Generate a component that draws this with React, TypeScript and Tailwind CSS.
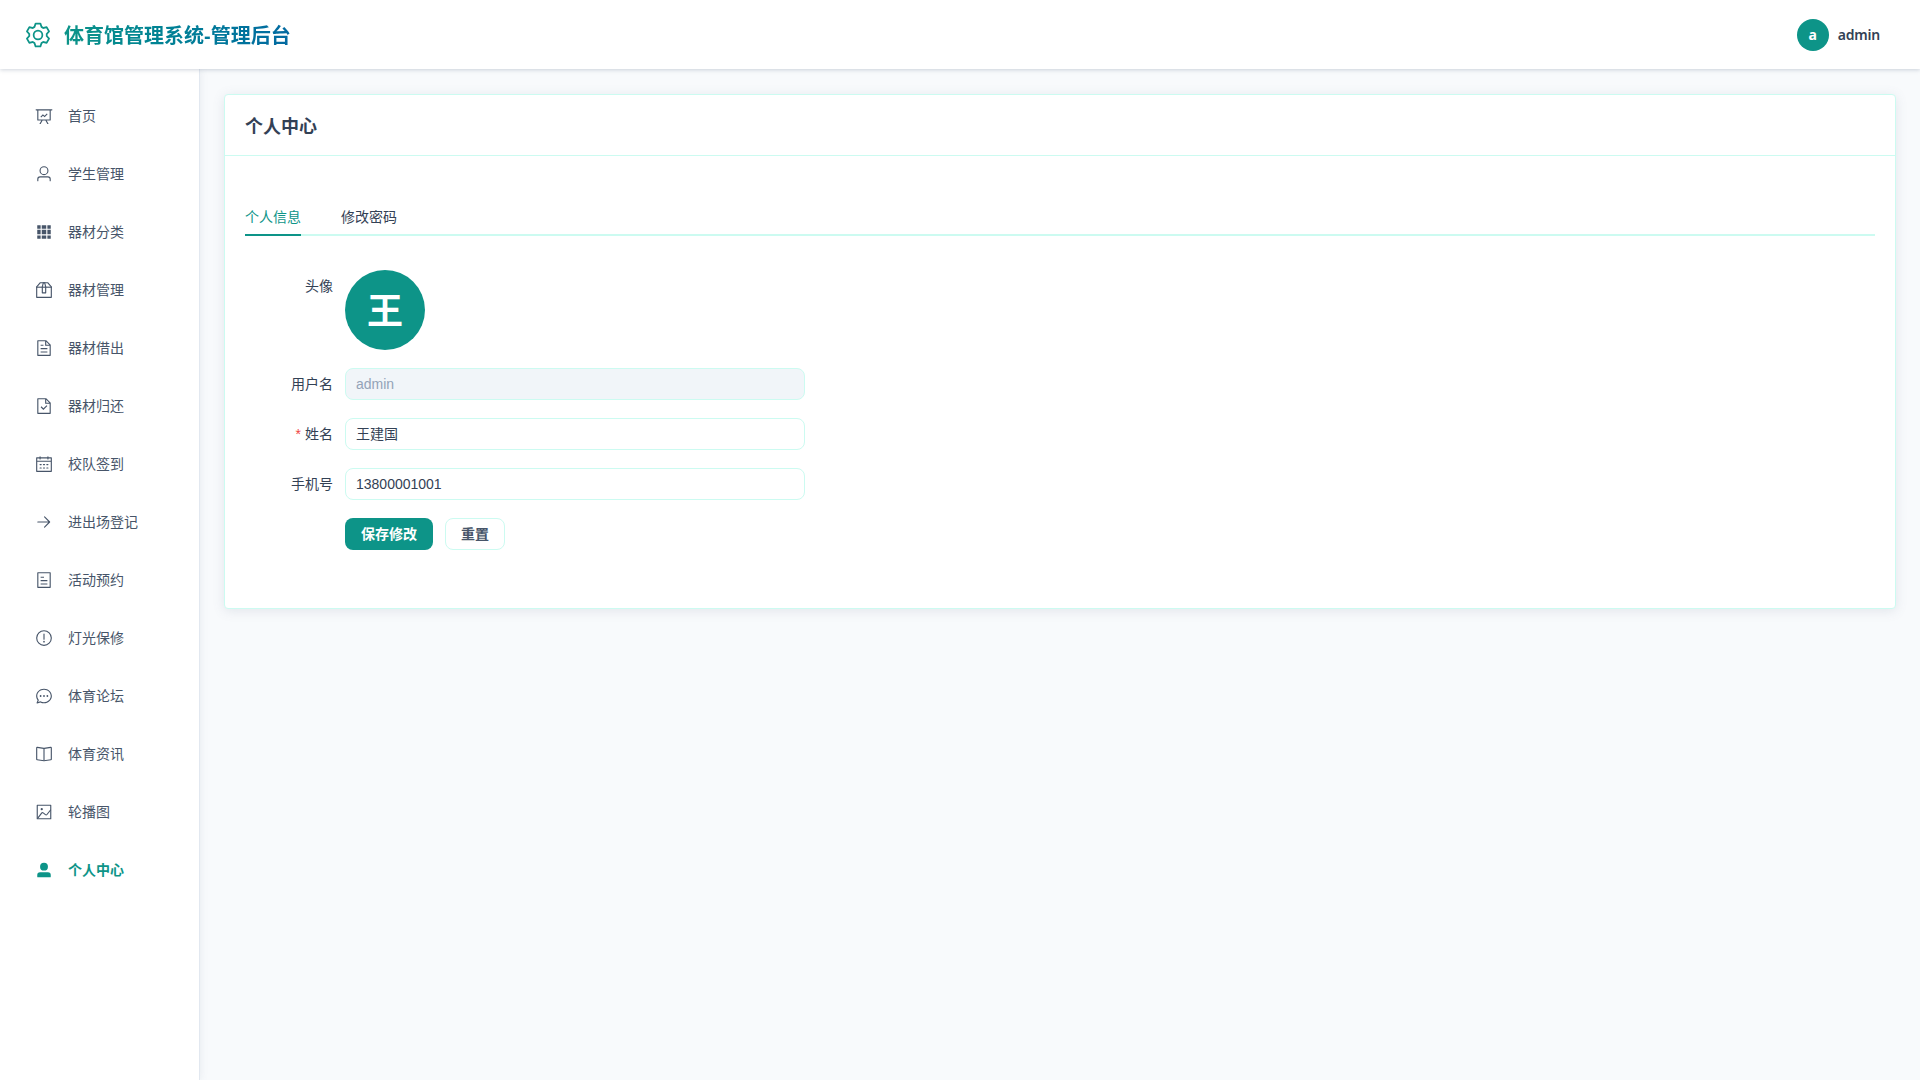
import React from 'react';

const FONT = "font-['Liberation_Sans','Noto_Sans_CJK_SC',sans-serif]";

// element-style icons on the 1024 grid
const icons: Record<string, string[]> = {
  dataLine: [
    'M359.168 768H160a32 32 0 0 1-32-32V192H64a32 32 0 0 1 0-64h896a32 32 0 1 1 0 64h-64v544a32 32 0 0 1-32 32H665.216l110.848 192h-73.856L591.36 768H433.024L322.176 960H248.32l110.848-192zM832 192H192v512h640V192z',
    'M352 600l-44-44 140-140 96 80 130-130 44 44-170 172-96-80z',
  ],
  user: [
    'M512 512a192 192 0 1 0 0-384 192 192 0 0 0 0 384zm0 64a256 256 0 1 1 0-512 256 256 0 0 1 0 512zm320 320v-96a96 96 0 0 0-96-96H288a96 96 0 0 0-96 96v96a32 32 0 1 1-64 0v-96a160 160 0 0 1 160-160h448a160 160 0 0 1 160 160v96a32 32 0 1 1-64 0z',
  ],
  grid: [
    'M640 384v256H384V384h256zm64 0h192v256H704V384zm-64 512H384V704h256v192zm64 0V704h192v192H704zm-64-768v192H384V128h256zm64 0h192v192H704V128zM320 384v256H128V384h192zm0 512H128V704h192v192zm0-768v192H128V128h192z',
  ],
  box: [
    'M317.056 128 128 344.064V896h768V344.064L706.944 128H317.056zm-14.528-64h418.944a32 32 0 0 1 24.064 10.88l206.528 236.096A32 32 0 0 1 960 332.032V928a32 32 0 0 1-32 32H96a32 32 0 0 1-32-32V332.032a32 32 0 0 1 7.936-21.12L278.4 75.008A32 32 0 0 1 302.528 64z',
    'M64 320h896v64H64z',
    'M448 327.872V640h128V327.872L526.08 128h-28.16L448 327.872zM448 64h128l64 256v352a32 32 0 0 1-32 32H416a32 32 0 0 1-32-32V320l64-256z',
  ],
  document: [
    'M832 384H576V128H192v768h640V384zm-26.496-64L640 154.496V320h165.504zM160 64h480l256 256v608a32 32 0 0 1-32 32H160a32 32 0 0 1-32-32V96a32 32 0 0 1 32-32zm160 448h384v64H320v-64zm0-192h160v64H320v-64zm0 384h384v64H320v-64z',
  ],
  documentChecked: [
    'M805.504 320 640 154.496V320h165.504zM832 384H576V128H192v768h640V384zM160 64h480l256 256v608a32 32 0 0 1-32 32H160a32 32 0 0 1-32-32V96a32 32 0 0 1 32-32zm318.4 582.144 180.992-180.992L704.64 510.4 478.4 736.64 320 578.304l45.248-45.312L478.4 646.144z',
  ],
  calendar: [
    'M128 384v512h768V192H768v32a32 32 0 1 1-64 0v-32H320v32a32 32 0 0 1-64 0v-32H128v128h768v64H128zm192-256h384V96a32 32 0 1 1 64 0v32h160a32 32 0 0 1 32 32v768a32 32 0 0 1-32 32H96a32 32 0 0 1-32-32V160a32 32 0 0 1 32-32h160V96a32 32 0 0 1 64 0v32zm-32 384h64a32 32 0 0 1 0 64h-64a32 32 0 0 1 0-64zm0 192h64a32 32 0 1 1 0 64h-64a32 32 0 1 1 0-64zm192-192h64a32 32 0 0 1 0 64h-64a32 32 0 0 1 0-64zm0 192h64a32 32 0 1 1 0 64h-64a32 32 0 1 1 0-64zm192-192h64a32 32 0 1 1 0 64h-64a32 32 0 1 1 0-64zm0 192h64a32 32 0 1 1 0 64h-64a32 32 0 1 1 0-64z',
  ],
  right: [
    'M754.752 480H160a32 32 0 1 0 0 64h594.752L521.344 777.344a32 32 0 0 0 45.312 45.312l288-288a32 32 0 0 0 0-45.312l-288-288a32 32 0 1 0-45.312 45.312L754.752 480z',
  ],
  tickets: [
    'M192 128v768h640V128H192zm-32-64h704a32 32 0 0 1 32 32v832a32 32 0 0 1-32 32H160a32 32 0 0 1-32-32V96a32 32 0 0 1 32-32zm160 448h384v64H320v-64zm0-192h192v64H320v-64zm0 384h384v64H320v-64z',
  ],
  warning: [
    'M512 64a448 448 0 1 1 0 896 448 448 0 0 1 0-896zm0 832a384 384 0 0 0 0-768 384 384 0 0 0 0 768zm48-176a48 48 0 1 1-96 0 48 48 0 0 1 96 0zm-48-464a32 32 0 0 1 32 32v288a32 32 0 0 1-64 0V288a32 32 0 0 1 32-32z',
  ],
  chat: [
    'm174.72 855.68 135.296-45.12 23.68 11.84C388.096 849.536 448.576 864 512 864c211.84 0 384-166.784 384-352S723.84 160 512 160 128 326.784 128 512c0 69.12 24.96 139.264 70.848 199.232l22.08 28.8-46.272 115.584zm-45.248 82.56A32 32 0 0 1 89.6 896l58.368-145.92C94.72 680.32 64 596.864 64 512 64 299.904 256 96 512 96s448 203.904 448 416-192 416-448 416a461.056 461.056 0 0 1-206.912-48.384l-175.616 58.56z',
    'M512 563.2a51.2 51.2 0 1 1 0-102.4 51.2 51.2 0 0 1 0 102.4zm192 0a51.2 51.2 0 1 1 0-102.4 51.2 51.2 0 0 1 0 102.4zm-384 0a51.2 51.2 0 1 1 0-102.4 51.2 51.2 0 0 1 0 102.4z',
  ],
  reading: [
    'm512 863.36 384-54.848v-638.72L525.568 222.72a96 96 0 0 1-27.136 0L128 169.792v638.72l384 54.848zM137.024 106.432l370.432 52.928a32 32 0 0 0 9.088 0l370.432-52.928A64 64 0 0 1 960 169.792v638.72a64 64 0 0 1-54.976 63.36l-388.48 55.488a32 32 0 0 1-9.088 0l-388.48-55.488A64 64 0 0 1 64 808.512v-638.72a64 64 0 0 1 73.024-63.36z',
    'M480 192h64v704h-64z',
  ],
  picture: [
    'M160 160v704h704V160H160zm-32-64h768a32 32 0 0 1 32 32v768a32 32 0 0 1-32 32H128a32 32 0 0 1-32-32V128a32 32 0 0 1 32-32z',
    'M384 288q64 0 64 64t-64 64q-64 0-64-64t64-64zM185.408 876.992l-50.816-38.912L350.72 556.032a96 96 0 0 1 134.592-17.856l1.856 1.472 122.88 99.136a32 32 0 0 0 44.992-4.864l216-269.888 49.92 39.936-215.808 269.824-.256.32a96 96 0 0 1-135.04 14.464l-122.88-99.072-.64-.512a32 32 0 0 0-44.8 5.952L185.408 876.992z',
  ],
  userFilled: [
    'M288 320a224 224 0 1 0 448 0 224 224 0 1 0-448 0zm544 608H160a32 32 0 0 1-32-32v-96a160 160 0 0 1 160-160h448a160 160 0 0 1 160 160v96a32 32 0 0 1-32 32z',
  ],
  setting: [
    'M600.704 64a32 32 0 0 1 30.464 22.208l35.2 109.376c14.784 7.232 28.928 15.36 42.432 24.512l112.384-24.192a32 32 0 0 1 34.432 15.36L944.32 364.8a32 32 0 0 1-4.032 37.504l-77.12 85.12a357.12 357.12 0 0 1 0 49.024l77.12 85.248a32 32 0 0 1 4.032 37.504l-88.704 153.6a32 32 0 0 1-34.432 15.296L708.8 803.904c-13.44 9.088-27.648 17.28-42.368 24.512l-35.264 109.376A32 32 0 0 1 600.704 960H423.296a32 32 0 0 1-30.464-22.208L357.696 828.48a351.616 351.616 0 0 1-42.56-24.64l-112.32 24.256a32 32 0 0 1-34.432-15.36L79.68 659.2a32 32 0 0 1 4.032-37.504l77.12-85.248a357.12 357.12 0 0 1 0-48.896l-77.12-85.248A32 32 0 0 1 79.68 364.8l88.704-153.6a32 32 0 0 1 34.432-15.296l112.32 24.256c13.568-9.152 27.776-17.408 42.56-24.64l35.2-109.312A32 32 0 0 1 423.232 64H600.64zm-23.424 64H446.72l-36.352 113.088-24.512 11.968a294.113 294.113 0 0 0-34.816 20.096l-22.656 15.36-116.224-25.088-65.28 113.152 79.68 88.192-1.92 27.136a293.12 293.12 0 0 0 0 40.192l1.92 27.136-79.808 88.192 65.344 113.152 116.224-25.024 22.656 15.296a294.113 294.113 0 0 0 34.816 20.096l24.512 11.968L446.72 896h130.688l36.48-113.152 24.448-11.904a288.282 288.282 0 0 0 34.752-20.096l22.592-15.296 116.288 25.024 65.28-113.152-79.744-88.192 1.92-27.136a293.12 293.12 0 0 0 0-40.256l-1.92-27.136 79.808-88.128-65.344-113.152-116.288 24.96-22.592-15.232a287.616 287.616 0 0 0-34.752-20.096l-24.448-11.904L577.344 128zM512 320a192 192 0 1 1 0 384 192 192 0 0 1 0-384zm0 64a128 128 0 1 0 0 256 128 128 0 0 0 0-256z',
  ],
};

function Icon({ name, className }: { name: string; className?: string }) {
  return (
    <svg viewBox="0 0 1024 1024" fill="currentColor" className={className}>
      {icons[name].map((d) => (
        <path key={d} d={d} />
      ))}
    </svg>
  );
}

const menu = [
  { label: '首页', icon: 'dataLine' },
  { label: '学生管理', icon: 'user' },
  { label: '器材分类', icon: 'grid' },
  { label: '器材管理', icon: 'box' },
  { label: '器材借出', icon: 'document' },
  { label: '器材归还', icon: 'documentChecked' },
  { label: '校队签到', icon: 'calendar' },
  { label: '进出场登记', icon: 'right' },
  { label: '活动预约', icon: 'tickets' },
  { label: '灯光保修', icon: 'warning' },
  { label: '体育论坛', icon: 'chat' },
  { label: '体育资讯', icon: 'reading' },
  { label: '轮播图', icon: 'picture' },
  { label: '个人中心', icon: 'userFilled', active: true },
];

function FormRow({ label, required, children }: { label: string; required?: boolean; children: React.ReactNode }) {
  return (
    <div className="flex mb-[18px]">
      <label className="w-[100px] h-8 pr-3 flex items-center justify-end text-sm text-[#334155] shrink-0">
        {required && <span className="text-[#ef4444] mr-1">*</span>}
        {label}
      </label>
      {children}
    </div>
  );
}

function Field({ value, disabled }: { value: string; disabled?: boolean }) {
  return (
    <div
      className={
        'w-[460px] h-8 px-[10px] flex items-center text-sm rounded-lg border border-[#ccfbf1] ' +
        (disabled ? 'bg-[#f1f5f9] text-[#94a3b8]' : 'bg-white text-[#334155]')
      }
    >
      {value}
    </div>
  );
}

export default function App() {
  return (
    <div className={'h-screen flex flex-col bg-[#f8fafc] overflow-hidden ' + FONT}>
      <header className="h-[69px] shrink-0 bg-white flex items-center justify-between pl-6 pr-10 z-10 shadow-[0_1px_4px_rgba(100,116,139,0.3)]">
        <div className="flex items-center gap-3">
          <Icon name="setting" className="w-7 h-7 text-[#0d9488]" />
          <span className="pt-[2px] text-xl font-bold bg-gradient-to-r from-[#0d9488] to-[#0369a1] bg-clip-text text-transparent">
            体育馆管理系统-管理后台
          </span>
        </div>
        <div className="flex items-center gap-[9px]">
          <div className="w-8 h-8 rounded-full bg-[#0d9488] text-white text-sm font-bold flex items-center justify-center font-['Noto_Sans']">
            a
          </div>
          <span className="text-sm font-semibold text-[#334155] font-['Noto_Sans'] tracking-[-0.2px]">admin</span>
        </div>
      </header>
      <div className="flex-1 flex min-h-0">
        <aside className="w-[200px] shrink-0 bg-white border-r border-[#e2e8f0] pt-[22px] shadow-[0_0_8px_rgba(100,116,139,0.12)]">
          {menu.map((item) => (
            <div
              key={item.label}
              className={
                'h-[50px] mb-2 pl-[35px] flex items-center gap-[15px] text-sm ' +
                (item.active ? 'text-[#0d9488] font-bold' : 'text-[#475569]')
              }
            >
              <Icon name={item.icon} className="w-[18px] h-[18px]" />
              <span>{item.label}</span>
            </div>
          ))}
        </aside>
        <main className="flex-1 pt-[25px] pl-6 pr-6">
          <div className="h-[515px] bg-white rounded border border-[#ccfbf1] shadow-[0_2px_12px_rgba(100,116,139,0.15)]">
            <div className="h-[61px] px-5 pt-1 flex items-center border-b border-[#ccfbf1] text-lg font-bold text-[#334155]">
              个人中心
            </div>
            <div className="px-5 pt-[40px]">
              <div className="flex gap-10 h-[40px] border-b-2 border-[#ccfbf1] text-sm">
                <div className="h-[40px] pt-1 flex items-center border-b-2 border-[#0d9488] text-[#0d9488]">个人信息</div>
                <div className="h-[40px] pt-[1px] flex items-center text-[#334155]">修改密码</div>
              </div>
              <div className="pt-[34px]">
                <FormRow label="头像">
                  <div className="w-20 h-20 pt-1 rounded-full bg-[#0d9488] text-white text-[36px] font-bold flex items-center justify-center">
                    王
                  </div>
                </FormRow>
                <FormRow label="用户名">
                  <Field value="admin" disabled />
                </FormRow>
                <FormRow label="姓名" required>
                  <Field value="王建国" />
                </FormRow>
                <FormRow label="手机号">
                  <Field value="13800001001" />
                </FormRow>
                <div className="flex gap-3 pl-[100px]">
                  <button className="w-[88px] h-8 rounded-lg bg-[#0d9488] text-white text-sm font-bold">保存修改</button>
                  <button className="w-[60px] h-8 rounded-lg bg-white border border-[#ccfbf1] text-[#475569] text-sm font-bold">重置</button>
                </div>
              </div>
            </div>
          </div>
        </main>
      </div>
    </div>
  );
}
